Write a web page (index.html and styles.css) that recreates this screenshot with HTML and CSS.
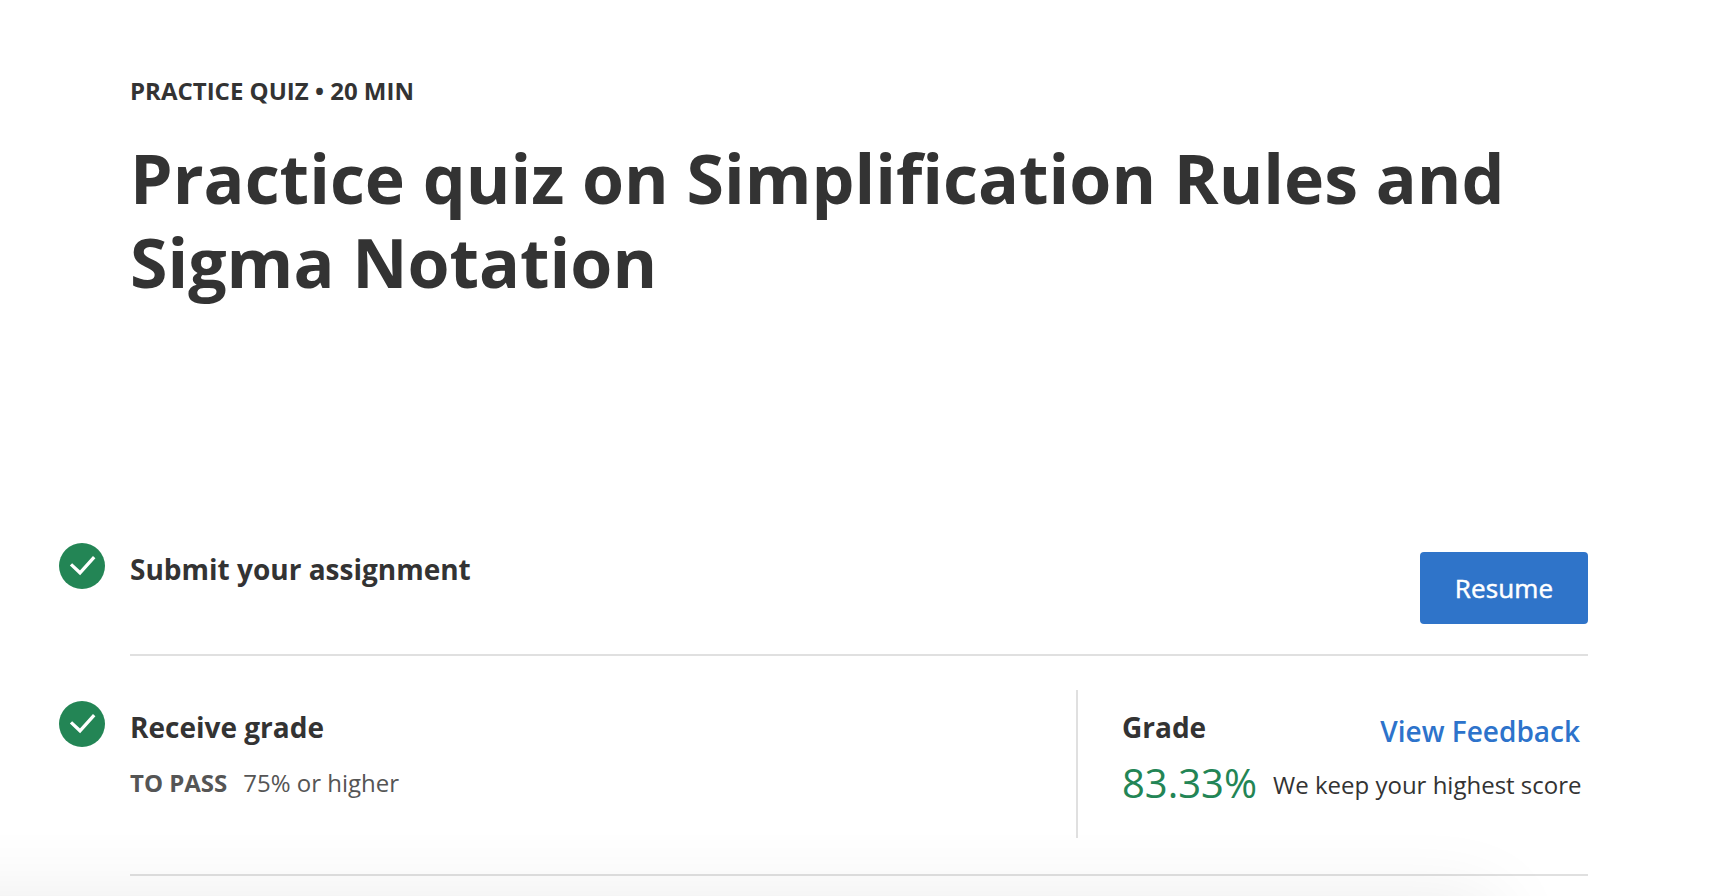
FILE: index.html
```html
<!DOCTYPE html>
<html lang="en">
<head>
<meta charset="utf-8">
<title>Practice quiz</title>
<link rel="stylesheet" href="styles.css">
</head>
<body>
<main class="page">
  <header class="intro">
    <p class="eyebrow">PRACTICE QUIZ • 20 MIN</p>
    <h1 class="title">Practice quiz on Simplification Rules and Sigma Notation</h1>
  </header>
  <section class="row submit">
    <svg class="check" viewBox="0 0 46 46"><circle cx="23" cy="23" r="23"/><path d="M12 21.4l9 8.4L35.2 14.2"/></svg>
    <h2 class="heading">Submit your assignment</h2>
    <button class="resume">Resume</button>
  </section>
  <section class="row receive">
    <svg class="check" viewBox="0 0 46 46"><circle cx="23" cy="23" r="23"/><path d="M12 21.4l9 8.4L35.2 14.2"/></svg>
    <div class="info">
      <h2 class="heading">Receive grade</h2>
      <p class="pass"><strong>TO PASS</strong><span>75% or higher</span></p>
    </div>
    <div class="grade">
      <div class="grade-top"><h2 class="heading">Grade</h2><a class="feedback">View Feedback</a></div>
      <div class="grade-bottom"><span class="score">83.33%</span><span class="note">We keep your highest score</span></div>
    </div>
  </section>
</main>
<div class="shade"></div>
</body>
</html>
```
FILE: styles.css
```css
* { box-sizing: border-box; }
html { overflow: hidden; }
body { margin: 0; position: relative; background: #fff; color: #333; font-family: "Open Sans", sans-serif; height: 896px; overflow: hidden; }
h1, h2, p { margin: 0; }
.page { width: 1458px; margin-left: 130px; padding-top: 73px; }
.intro { height: 449px; }
.eyebrow { font-size: 24px; line-height: 36px; font-weight: 700; }
.title { margin-top: 27px; font-size: 68px; line-height: 84px; font-weight: 700; }
.row { display: flex; align-items: flex-start; border-bottom: 2px solid #e0e0e0; }
.check { width: 46px; height: 46px; flex: none; margin-left: -71px; margin-right: 25px; }
.check circle { fill: #238555; }
.check path { fill: none; stroke: #fff; stroke-width: 3.3; }
.heading { font-size: 28px; line-height: 40px; font-weight: 700; }
.submit { height: 134px; padding-top: 21px; }
.submit .heading { margin-top: 6px; flex: 1; }
.resume { margin-top: 9px; width: 168px; height: 72px; border: 0; border-radius: 4px; background: #2f74c9; color: #fff; font: 400 26px "Open Sans", sans-serif; letter-spacing: .15px; -webkit-text-stroke: .5px #fff; }
.receive { height: 220px; padding-top: 34px; }
.receive .check { margin-top: 11px; }
.info { flex: 1; padding-top: 17px; }
.pass { display: flex; gap: 16px; margin-top: 18px; font-size: 24px; line-height: 36px; color: #555; }
.grade { width: 512px; height: 148px; border-left: 2px solid #e0e0e0; padding: 17px 8px 0 44px; }
.grade-top { display: flex; justify-content: space-between; height: 52px; }
.feedback { margin-top: 4px; color: #2d73cb; font-size: 28px; line-height: 40px; font-weight: 600; }
.grade-bottom { display: flex; white-space: nowrap; align-items: flex-start; gap: 16px; }
.score { color: #238555; font-size: 40px; line-height: 48px; }
.note { margin-top: 8px; font-size: 24px; line-height: 36px; }
/* soft shadow rising from the bottom edge */
.shade { position: absolute; left: -100px; width: 1496px; top: 896px; height: 0; box-shadow: 0 104px 80px 100px rgba(0,0,0,.085); pointer-events: none; }
```
